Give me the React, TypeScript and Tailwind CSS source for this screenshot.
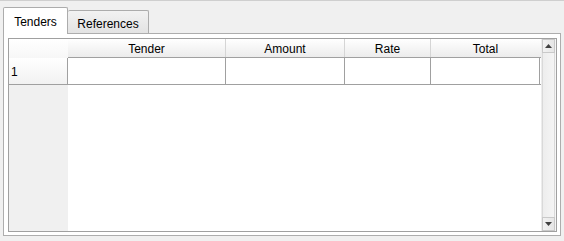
import React from "react";

// Tendered payments panel: a tab strip over a grid with row headers
// and a vertical scrollbar, drawn in the classic Windows look.

type Column = { label: string; width: string };

const COLUMNS: Column[] = [
  { label: "Tender", width: "w-[158px]" },
  { label: "Amount", width: "w-[119px]" },
  { label: "Rate", width: "w-[86px]" },
  { label: "Total", width: "w-[109px]" },
];

function Arrow({ up }: { up?: boolean }) {
  return (
    <svg width="7" height="4" viewBox="0 0 7 4" className="block">
      {up ? (
        <polygon points="3.5,0 7,4 0,4" fill="#404040" />
      ) : (
        <polygon points="0,0 7,0 3.5,4" fill="#404040" />
      )}
    </svg>
  );
}

function ScrollBar() {
  return (
    <div className="flex w-[15px] shrink-0 flex-col bg-gradient-to-r from-[#ececec] to-[#f6f6f6] px-[1px]">
      <div className="flex h-[14px] items-center justify-center border border-[#c9c9c9] bg-gradient-to-r from-[#f2f2f2] to-[#e6e6e6]">
        <Arrow up />
      </div>
      <div className="flex-1 border-x border-[#d9d9d9]" />
      <div className="flex h-[14px] items-center justify-center border border-[#c9c9c9] bg-gradient-to-r from-[#f2f2f2] to-[#e6e6e6]">
        <Arrow />
      </div>
    </div>
  );
}

export default function App() {
  return (
    <div
      className="h-[241px] w-[564px] overflow-hidden border-t border-[#cfcfcf] bg-[#f0f0f0] text-[12px] text-black"
      style={{ fontFamily: '"Liberation Sans", Arial, sans-serif' }}
    >
      {/* tab strip */}
      <div className="mt-[6px] flex items-end pl-[3px]">
        <div className="relative z-10 -mb-px flex h-[27px] w-[65px] items-center justify-center rounded-t-[2px] border border-b-0 border-[#acacac] bg-white pt-[2px]">
          Tenders
        </div>
        <div className="flex h-[23px] w-[81px] items-center justify-center rounded-t-[2px] border border-l-0 border-b-0 border-[#acacac] bg-gradient-to-b from-[#f2f2f2] to-[#e3e3e3] pt-[3px]">
          References
        </div>
      </div>

      {/* tab page */}
      <div className="ml-[3px] h-[203px] w-[558px] border border-[#adadad] bg-white pl-[4px] pr-[3px] pt-[4px] pb-[3px]">
        <div className="flex h-[194px] w-[549px] border border-[#a0a0a0] bg-white">
          {/* row headers */}
          <div className="flex w-[59px] shrink-0 flex-col bg-[#f0f0f0]">
            <div className="h-[19px] bg-gradient-to-b from-white to-[#f7f7f7]" />
            <div className="flex h-[27px] items-center border-r border-b border-[#a0a0a0] bg-gradient-to-b from-white to-[#f2f2f2] pl-[2px] pt-[2px]">
              1
            </div>
          </div>

          {/* columns */}
          <div className="flex flex-1 flex-col">
            <div className="flex h-[19px] border-b border-[#a0a0a0] bg-gradient-to-b from-white to-[#ececec]">
              {COLUMNS.map((c, i) => (
                <div
                  key={c.label}
                  className={`${c.width} flex shrink-0 items-center justify-center ${
                    i < COLUMNS.length - 1 ? "border-r border-[#d5d5d5]" : ""
                  } pt-[2px]`}
                >
                  {c.label}
                </div>
              ))}
            </div>
            <div className="flex h-[27px] border-b border-[#a0a0a0]">
              {COLUMNS.map((c) => (
                <div key={c.label} className={`${c.width} shrink-0 border-r border-[#a0a0a0]`} />
              ))}
            </div>
            <div className="flex-1" />
          </div>

          <ScrollBar />
        </div>
      </div>
    </div>
  );
}
